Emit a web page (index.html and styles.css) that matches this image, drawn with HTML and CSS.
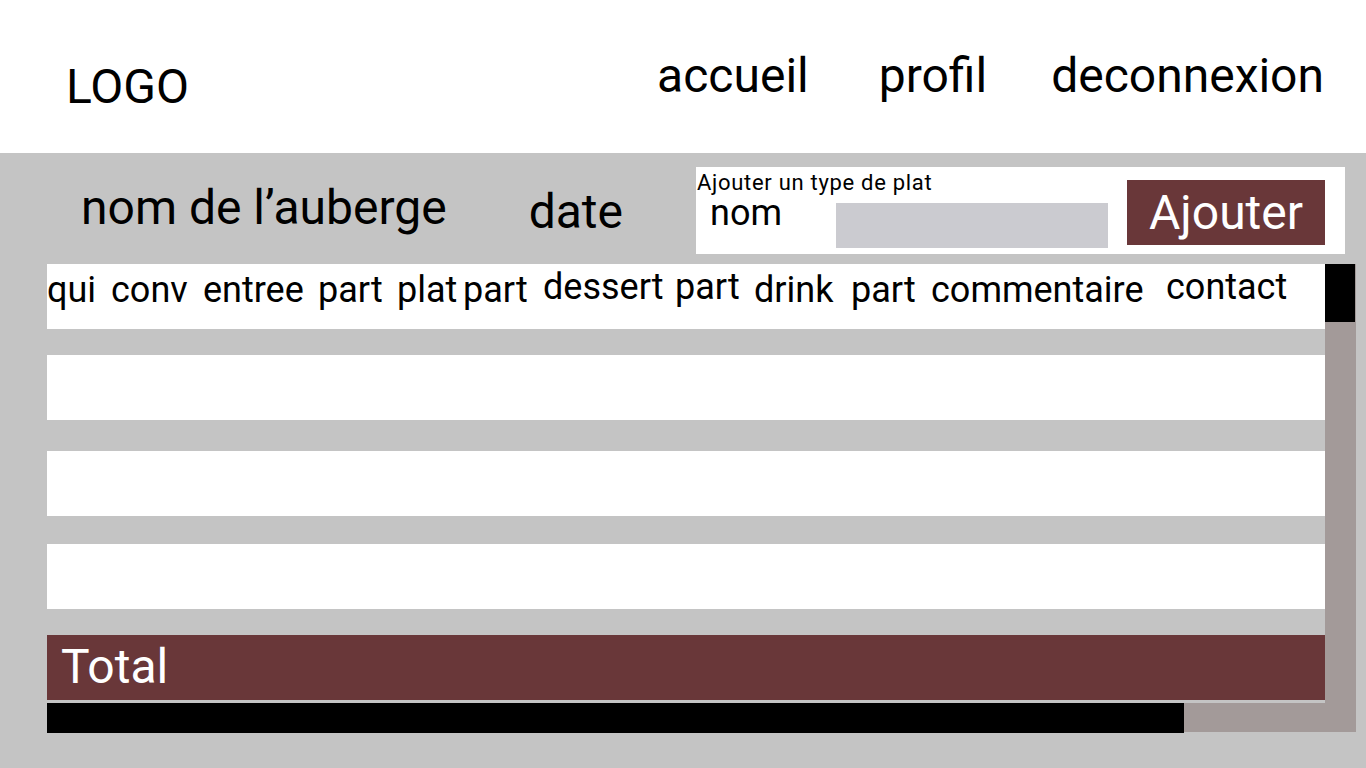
FILE: index.html
```html
<!DOCTYPE html>
<html lang="fr">
<head>
    <meta charset="UTF-8">
    <meta name="viewport" content="width=device-width, initial-scale=1.0">
    <title>Auberge</title>
    <link rel="stylesheet" href="styles.css">
</head>
<body>
    <header class="topbar">
        <div class="logo">LOGO</div>
        <nav class="menu">
            <a href="#">accueil</a>
            <a href="#">profil</a>
            <a href="#">deconnexion</a>
        </nav>
    </header>

    <main class="content">
        <div class="info-row">
            <div class="inn-name">nom de l’auberge</div>
            <div class="inn-date">date</div>
            <form class="add-panel">
                <div class="add-left">
                    <div class="add-title">Ajouter un type de plat</div>
                    <div class="add-fields">
                        <label class="add-label">nom</label>
                        <input class="add-input" type="text">
                    </div>
                </div>
                <button class="add-btn" type="button">Ajouter</button>
            </form>
        </div>

        <div class="table-wrap">
            <div class="table-body">
                <div class="row head-row">
                    <span>qui</span>
                    <span>conv</span>
                    <span>entree</span>
                    <span>part</span>
                    <span>plat</span>
                    <span>part</span>
                    <span class="up">dessert</span>
                    <span class="up">part</span>
                    <span>drink</span>
                    <span>part</span>
                    <span>commentaire</span>
                    <span class="up">contact</span>
                </div>
                <div class="row"></div>
                <div class="row"></div>
                <div class="row"></div>
                <div class="row total-row">Total</div>
            </div>
            <div class="vscroll"><div class="vthumb"></div></div>
            <div class="hscroll"><div class="hthumb"></div></div>
        </div>
    </main>
</body>
</html>
```

FILE: styles.css
```css
body {
    margin: 0;
    font-family: Roboto, "Liberation Sans", sans-serif;
    color: #000;
    background-color: #c4c4c4;
}
.topbar {
    height: 153px;
    background-color: #ffffff;
    display: flex;
    justify-content: space-between;
    align-items: flex-start;
}
.logo {
    font-size: 48px;
    margin: 58px 0 0 66px;
}
.menu {
    display: flex;
    gap: 64px;
    margin: 47px 42px 0 0;
}
.menu a {
    color: #000;
    text-decoration: none;
    font-size: 48px;
}
.menu a:first-child {
    margin-right: 6px;
}
.content {
    padding: 14px 10px 0 47px;
}
.info-row {
    display: flex;
    align-items: flex-start;
    height: 97px;
}
.inn-name {
    font-size: 48px;
    margin: 12px 0 0 34px;
}
.inn-date {
    font-size: 48px;
    margin: 16px 0 0 82px;
}
.add-panel {
    background-color: #ffffff;
    width: 649px;
    height: 87px;
    margin: 0 11px 0 auto;
    box-sizing: border-box;
    padding: 3px 20px 0 1px;
    display: flex;
    align-items: flex-start;
}
.add-left {
    width: 411px;
}
.add-title {
    font-size: 22px;
    letter-spacing: 0.7px;
}
.add-fields {
    display: flex;
    align-items: flex-start;
}
.add-label {
    font-size: 36px;
    margin: -3px 0 0 13px;
    width: 126px;
}
.add-input {
    width: 273px;
    height: 45px;
    border: none;
    background-color: #cbcbd0;
    margin-top: 8px;
    padding: 0;
}
.add-btn {
    width: 198px;
    height: 65px;
    margin: 10px 0 0 19px;
    border: none;
    background-color: #693739;
    color: #ffffff;
    font-family: Roboto, "Liberation Sans", sans-serif;
    font-size: 48px;
    padding: 0;
}
.table-wrap {
    display: grid;
    grid-template-columns: 1278px 31px;
    grid-template-rows: auto 30px;
}
.table-body {
    display: flex;
    flex-direction: column;
}
.row {
    height: 65px;
    background-color: #ffffff;
    margin-bottom: 26px;
}
.row:nth-child(2) {
    margin-bottom: 31px;
}
.row:nth-child(3) {
    margin-bottom: 28px;
}
.head-row {
    display: grid;
    grid-template-columns: 64px 92px 115px 79px 66px 80px 132px 79px 97px 80px 235px auto;
    font-size: 36px;
    padding-top: 5px;
    box-sizing: border-box;
}
.head-row .up {
    margin-top: -3px;
}
.total-row {
    background-color: #693739;
    color: #ffffff;
    font-size: 48px;
    padding: 3px 0 0 14px;
    box-sizing: border-box;
    margin-bottom: 3px;
}
.vscroll {
    background-color: #a39a99;
}
.vthumb {
    height: 58px;
    width: 30px;
    background-color: #000;
}
.hscroll {
    grid-column: 1 / 3;
    background-color: #a39a99;
    height: 29px;
}
.hthumb {
    width: 1137px;
    height: 30px;
    background-color: #000;
}
```
